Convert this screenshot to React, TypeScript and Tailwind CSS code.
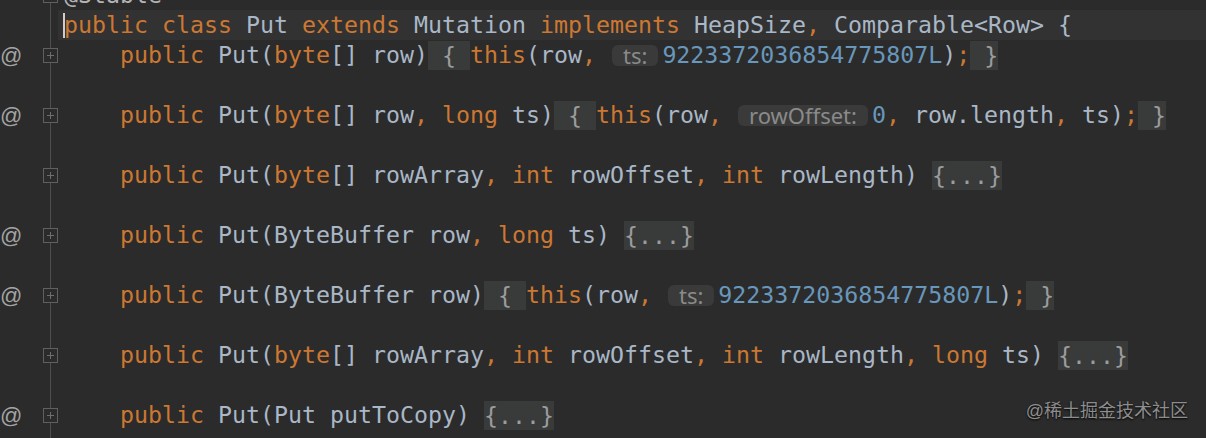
import React from "react";

type Tok = [string, string];

const K = "text-[#cc7832]";
const I = "text-[#a9b7c6]";
const N = "text-[#6897bb]";

const lines: { at: boolean; fold: boolean; toks: Tok[] }[] = [
  { at: false, fold: true, toks: [["a", "@Stable"]] },
  {
    at: false,
    fold: false,
    toks: [
      ["k", "public"], ["p", " "], ["k", "class"], ["p", " Put "], ["k", "extends"],
      ["p", " Mutation "], ["k", "implements"], ["p", " HeapSize"], ["k", ","],
      ["p", " Comparable<Row> {"],
    ],
  },
  {
    at: true,
    fold: true,
    toks: [
      ["p", "    "], ["k", "public"], ["p", " Put("], ["k", "byte"], ["p", "[] row)"],
      ["f", " { "], ["k", "this"], ["p", "(row"], ["k", ","], ["p", " "], ["h", "ts:"],
      ["n", "9223372036854775807L"], ["p", ")"], ["k", ";"], ["f", " }"],
    ],
  },
  { at: false, fold: false, toks: [] },
  {
    at: true,
    fold: true,
    toks: [
      ["p", "    "], ["k", "public"], ["p", " Put("], ["k", "byte"], ["p", "[] row"], ["k", ","],
      ["p", " "], ["k", "long"], ["p", " ts)"], ["f", " { "], ["k", "this"], ["p", "(row"],
      ["k", ","], ["p", " "], ["h", "rowOffset:"], ["n", "0"], ["k", ","], ["p", " row.length"],
      ["k", ","], ["p", " ts)"], ["k", ";"], ["f", " }"],
    ],
  },
  { at: false, fold: false, toks: [] },
  {
    at: false,
    fold: true,
    toks: [
      ["p", "    "], ["k", "public"], ["p", " Put("], ["k", "byte"], ["p", "[] rowArray"], ["k", ","],
      ["p", " "], ["k", "int"], ["p", " rowOffset"], ["k", ","], ["p", " "], ["k", "int"],
      ["p", " rowLength) "], ["f", "{...}"],
    ],
  },
  { at: false, fold: false, toks: [] },
  {
    at: true,
    fold: true,
    toks: [
      ["p", "    "], ["k", "public"], ["p", " Put(ByteBuffer row"], ["k", ","], ["p", " "],
      ["k", "long"], ["p", " ts) "], ["f", "{...}"],
    ],
  },
  { at: false, fold: false, toks: [] },
  {
    at: true,
    fold: true,
    toks: [
      ["p", "    "], ["k", "public"], ["p", " Put(ByteBuffer row)"], ["f", " { "], ["k", "this"],
      ["p", "(row"], ["k", ","], ["p", " "], ["h", "ts:"], ["n", "9223372036854775807L"],
      ["p", ")"], ["k", ";"], ["f", " }"],
    ],
  },
  { at: false, fold: false, toks: [] },
  {
    at: false,
    fold: true,
    toks: [
      ["p", "    "], ["k", "public"], ["p", " Put("], ["k", "byte"], ["p", "[] rowArray"], ["k", ","],
      ["p", " "], ["k", "int"], ["p", " rowOffset"], ["k", ","], ["p", " "], ["k", "int"],
      ["p", " rowLength"], ["k", ","], ["p", " "], ["k", "long"], ["p", " ts) "], ["f", "{...}"],
    ],
  },
  { at: false, fold: false, toks: [] },
  {
    at: true,
    fold: true,
    toks: [
      ["p", "    "], ["k", "public"], ["p", " Put(Put putToCopy) "], ["f", "{...}"],
    ],
  },
  { at: false, fold: false, toks: [] },
];

function Token({ t }: { t: Tok }) {
  const [kind, text] = t;
  if (kind === "k") return <span className={K}>{text}</span>;
  if (kind === "n") return <span className={N}>{text}</span>;
  if (kind === "a") return <span className="text-[#b4b4b4]">{text}</span>;
  if (kind === "f")
    return (
      <span className="h-[29px] leading-[29px] bg-[#393a3a] text-[#9c9c9c]">{text}</span>
    );
  if (kind === "h")
    return (
      <span
        className="ml-[2px] mr-[4px] h-[21px] px-[11px] rounded-[6px] bg-[#3a3a3a] text-[#8a8a8a] text-[22px] leading-[21px] flex items-center"
        style={{ fontFamily: '"Noto Sans", "Liberation Sans", sans-serif' }}
      >
        {text}
      </span>
    );
  return <span className={I}>{text}</span>;
}

function FoldBox() {
  return (
    <span className="relative w-[15px] h-[15px] border border-[#606060] bg-[#2b2b2b] flex items-center justify-center">
      <span className="absolute w-[7px] h-px bg-[#6e6e6e]" />
      <span className="absolute w-px h-[7px] bg-[#6e6e6e]" />
    </span>
  );
}

export default function App() {
  return (
    <div className="relative w-[1206px] h-[438px] overflow-hidden bg-[#2b2b2b]">
      <div className="flex flex-col mt-[-20px]">
        {lines.map((ln, idx) => (
          <div key={idx} className="flex h-[30px]">
            <div className="flex w-[58px] h-full shrink-0">
              <div
                className="w-[43px] h-full flex items-center text-[#a3a3a3] text-[22px]"
                style={{ fontFamily: '"Liberation Sans", Arial, sans-serif' }}
              >
                {ln.at ? "@" : ""}
              </div>
              <div className="relative w-[15px] h-full flex items-center justify-center">
                <span className="absolute left-[7px] top-0 bottom-0 w-px bg-[#4e4e4e]" />
                {ln.fold ? <FoldBox /> : null}
              </div>
            </div>
            <div
              className={
                "relative flex-1 h-full pl-[6px] flex items-center whitespace-pre text-[23.25px] leading-[30px] " +
                (idx === 1 ? "bg-[#323232]" : "")
              }
              style={{ fontFamily: '"DejaVu Sans Mono", "Liberation Mono", monospace' }}
            >
              {idx === 1 ? (
                <span className="absolute left-[5px] top-[3px] w-[2px] h-[25px] bg-[#d8c8c8]" />
              ) : null}
              {ln.toks.map((t, j) => (
                <Token key={j} t={t} />
              ))}
            </div>
          </div>
        ))}
      </div>
      <div
        className="absolute right-[18px] bottom-[16px] text-[18px] leading-[22px] text-[#8d8d8d] [text-shadow:0_1px_2px_#000]"
        style={{ fontFamily: '"Liberation Sans", "Noto Sans CJK SC", sans-serif' }}
      >
        @稀土掘金技术社区
      </div>
    </div>
  );
}
